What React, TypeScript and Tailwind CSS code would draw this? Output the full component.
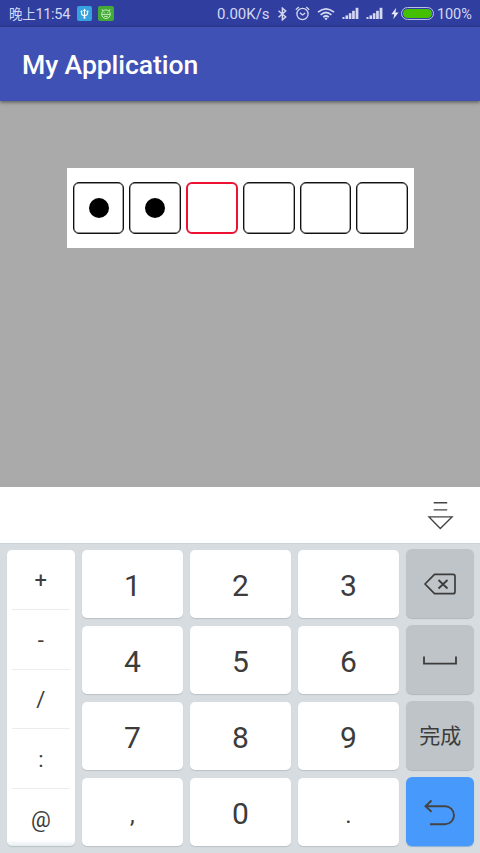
import React from "react";

const numberRows = [
  ["1", "2", "3"],
  ["4", "5", "6"],
  ["7", "8", "9"],
  [",", "0", "."],
];
const symbols = ["+", "-", "/", ":", "@"];

function Signal() {
  return (
    <svg width="18" height="13" viewBox="0 0 18 13" fill="#d5d8f2">
      <rect x="0.5" y="10" width="2" height="2" />
      <rect x="3.5" y="8.4" width="2.5" height="3.6" />
      <rect x="6.8" y="6.2" width="2.6" height="5.8" />
      <rect x="10.1" y="3.8" width="2.7" height="8.2" />
      <rect x="13.6" y="0.8" width="2.8" height="11.2" />
    </svg>
  );
}

function StatusBar() {
  return (
    <div className="flex h-[27px] items-center bg-[#303f9f] pl-[9px] text-[#d5d8f2]">
      <span className="w-[61px] whitespace-nowrap pt-px text-[14.5px] leading-[20px] tracking-[-0.3px]">
        <span className="text-[13.5px]">晚上</span>11:54
      </span>
      <svg className="ml-[7px]" width="15" height="15" viewBox="0 0 15 15">
        <rect width="15" height="15" rx="2" fill="#36a3df" />
        <g stroke="#fff" fill="none" strokeWidth="1.1">
          <path d="M7.5 3.5V12M4.5 5.5v2q0 1.7 3 2.3M10.5 5.5v2q0 1.7-3 2.3" />
        </g>
        <path d="M5.9 5 7.5 2.5 9.1 5z" fill="#fff" />
        <circle cx="7.5" cy="11.7" r="1.1" fill="#fff" />
        <circle cx="4.5" cy="5.4" r=".9" fill="#fff" />
        <rect x="9.7" y="4.6" width="1.7" height="1.7" fill="#fff" />
      </svg>
      <svg className="ml-[6px]" width="16" height="15" viewBox="0 0 16 15">
        <rect width="16" height="15" rx="2" fill="#43ab35" />
        <g stroke="#d5f0cf" fill="none" strokeWidth="0.9">
          <circle cx="8" cy="8.2" r="4.3" />
          <path d="M5 5 4 3.2M11 5l1-1.8M3.9 8.4h8.2M5.9 6.6h.8M9.3 6.6h.8M6.2 10.4h3.6" />
        </g>
      </svg>
      <span className="ml-[103px] w-[54px] whitespace-nowrap pt-px text-[15px] leading-[20px]">0.00K/s</span>
      <svg className="ml-[6px]" width="11" height="14" viewBox="0 0 11 14" fill="none" stroke="#d5d8f2" strokeWidth="1.45">
        <path d="M1.5 3.8 8.7 10 5.4 12.8V1.2L8.7 4 1.5 10.2" />
      </svg>
      <svg className="ml-[7px]" width="15" height="15" viewBox="0 0 15 15" fill="none" stroke="#d5d8f2" strokeWidth="1.3">
        <circle cx="7.5" cy="8" r="5.6" />
        <path d="M4.9 6.8 7.5 9l2.7-2.1M.8 3.7 3.8 1M14.2 3.7l-3-2.7" />
      </svg>
      <svg className="ml-[7px]" width="18" height="14" viewBox="0 0 18 14" fill="none" stroke="#d5d8f2" strokeWidth="1.7">
        <path d="M1 5.1Q9-1.5 17 5.1M3.6 7.8Q9 3.2 14.4 7.8M6.2 10.2Q9 7.8 11.8 10.2" />
        <path d="M7.3 11.4Q9 10.3 10.7 11.4L9 13.2z" fill="#d5d8f2" stroke="none" />
      </svg>
      <div className="ml-[7px] flex gap-[6px]">
        <Signal />
        <Signal />
      </div>
      <svg className="ml-[7px]" width="8" height="13" viewBox="0 0 8 13" fill="#e8eafa">
        <path d="M5.2.8.4 7.2h2.9l-1 5L7.6 5.4H4.4z" />
      </svg>
      <div className="ml-[2px] h-[13px] w-[33px] rounded-full border border-[#b9bfea] bg-[#303f9f] p-px">
        <div className="h-full rounded-full bg-[#45c000]" />
      </div>
      <span className="ml-[3px] whitespace-nowrap pt-[2px] text-[14.5px] leading-[20px] tracking-[-0.1px]">100%</span>
    </div>
  );
}

function PinBox({ filled, active }: { filled?: boolean; active?: boolean }) {
  return (
    <div
      className={
        active
          ? "flex size-[52px] items-center justify-center rounded-[6px] border-2 border-[#ed1234]"
          : "flex h-[52px] w-[51.5px] items-center justify-center rounded-[6px] border-[1.5px] border-[#111] shadow-[inset_0_0_0_0.4px_#222]"
      }
    >
      {filled && <div className="size-5 rounded-full bg-black" />}
    </div>
  );
}

const actionKey =
  "flex h-[69px] items-center justify-center rounded-[6px] bg-[#bfc4c8] shadow-[0_1px_1px_#b0b6bb]";

export default function App() {
  return (
    <div className="flex h-[853px] w-[480px] flex-col overflow-hidden bg-[#aaaaaa] font-['Roboto','Noto_Sans_CJK_SC',sans-serif]">
      <StatusBar />
      <header className="flex h-[74px] items-center bg-[#3f51b5] pl-[22px] pt-[2px] text-[26.6px] font-medium tracking-[-0.1px] text-white shadow-[0_1px_4px_rgba(0,0,0,0.55)]">
        My Application
      </header>
      <main className="h-[386px] pl-[67px] pt-[67px]">
        <div className="flex h-20 w-[346.5px] items-center gap-[5.1px] bg-white pl-[5.8px]">
          <PinBox filled />
          <PinBox filled />
          <PinBox active />
          <PinBox />
          <PinBox />
          <PinBox />
        </div>
      </main>
      <div className="flex h-[56px] justify-end bg-white pr-[26px] pt-[14px]">
        <svg width="28" height="29" viewBox="0 0 28 29" fill="none" stroke="#444" strokeWidth="1.4">
          <path d="M7.7 1.8h13.5M7.7 8.9h13.5M3 15.9h23L14.3 27.4z" />
        </svg>
      </div>
      <div className="grid h-[310px] grid-cols-[68px_100.8px_100.8px_100.8px_68.5px] gap-x-[7.2px] border-t border-[#ccd2d6] bg-[#d7dce0] pl-[6.8px] pt-[6px] text-[#3c3c3c]">
        <div className="flex h-[296px] flex-col rounded-[5px] bg-[linear-gradient(to_bottom,white_98%,#e6edf1_100%)] px-[5px] text-[22px] shadow-[0_1px_1px_#b8c0c6]">
          {symbols.map((s) => (
            <div
              key={s}
              className="flex h-[59.8px] shrink-0 items-center justify-center border-b border-[#eaeced] pt-[2px] last:h-[57px] last:border-0 last:pt-[4px]"
            >
              {s}
            </div>
          ))}
        </div>
        {[0, 1, 2].map((c) => (
          <div key={c} className="flex flex-col gap-2">
            {numberRows.map((row, r) => (
              <div
                key={r}
                className="flex h-[68px] items-center justify-center rounded-[5px] bg-white pt-[2px] text-[30px] shadow-[0_1px_1px_#b8c0c6]"
              >
                <span className={r === 3 && c !== 1 ? "pt-[3px] text-[24px]" : ""}>{row[c]}</span>
              </div>
            ))}
          </div>
        ))}
        <div className="-mt-px flex flex-col gap-[7px]">
          <div className={actionKey}>
            <svg width="32" height="22" viewBox="0 0 32 22" fill="none" stroke="#3c3c3c" strokeWidth="1.7">
              <path d="M10.5 1.3H29q2 0 2 2v15.4q0 2-2 2H10.5L1 11z" strokeLinejoin="round" />
              <path d="m14.5 7 9 8.5m0-8.5-9 8.5" strokeWidth="1.8" />
            </svg>
          </div>
          <div className={actionKey}>
            <svg className="mt-[2px]" width="34" height="9" viewBox="0 0 34 9" fill="none" stroke="#3c3c3c" strokeWidth="1.8">
              <path d="M1 .5V7.6H33V.5" />
            </svg>
          </div>
          <div className={actionKey + " pt-[3px] text-[21px]"}>完成</div>
          <div className="flex h-[69px] items-center justify-center rounded-[6px] bg-[#479afb] shadow-[0_1px_1px_#8fb0d4]">
            <svg className="mt-px" width="32" height="27" viewBox="0 0 32 27" fill="none" stroke="#444" strokeWidth="1.9">
              <path d="M1.5 7.2H21a9 9 0 0 1 0 18H6M7.5 1.5 1.5 7.2l6 5.5" />
            </svg>
          </div>
        </div>
      </div>
    </div>
  );
}
